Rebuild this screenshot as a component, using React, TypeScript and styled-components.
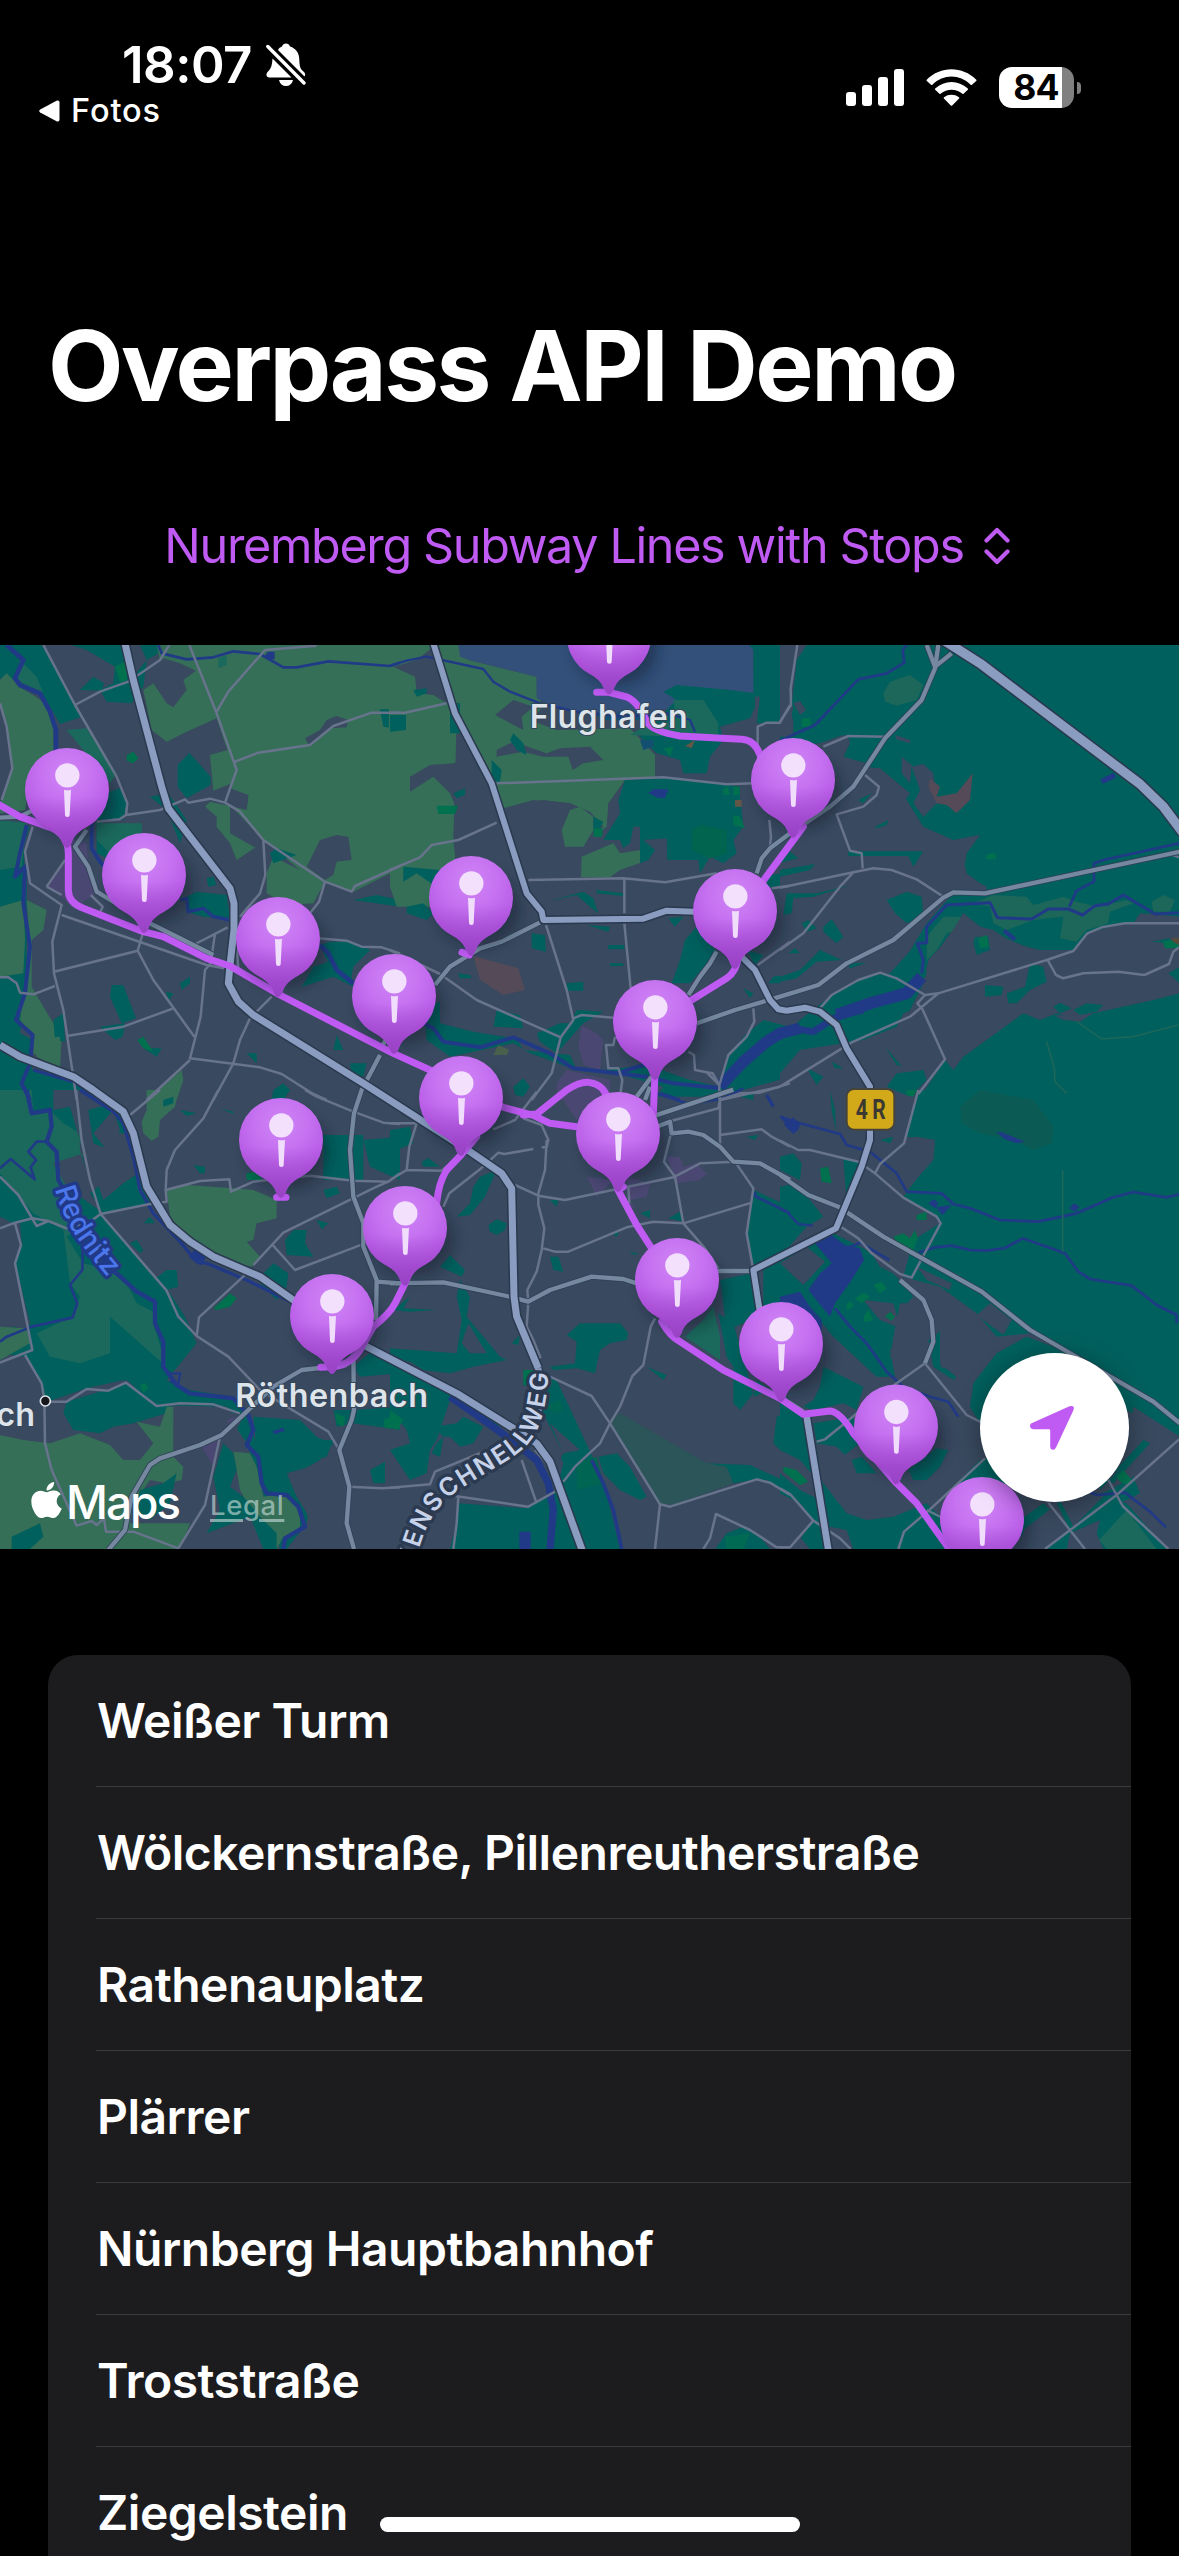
import React from "react";
import styled, { createGlobalStyle } from "styled-components";
import { FaApple } from "react-icons/fa";

const GlobalStyle = createGlobalStyle`
  html, body { margin: 0; padding: 0; background: #000; }
  * { box-sizing: border-box; }
`;

const Screen = styled.main`
  position: relative;
  display: flex;
  flex-direction: column;
  width: 1179px;
  height: 2556px;
  overflow: hidden;
  background: #000;
  color: #fff;
  font-family: Inter, "Liberation Sans", sans-serif;
`;

/* ---------- Status bar ---------- */

const StatusBar = styled.header`
  display: flex;
  flex: none;
  justify-content: space-between;
  height: 177px;
  padding: 0 98px 0 39px;
`;

const StatusLeft = styled.div`
  display: flex;
  flex-direction: column;
  padding-top: 41px;
`;

const ClockRow = styled.div`
  display: flex;
  align-items: center;
  height: 48px;
  padding-left: 83px;
  gap: 14px;
`;

const Clock = styled.span`
  font-size: 51px;
  font-weight: 600;
  line-height: 48px;
  letter-spacing: -0.5px;
`;

const BackLink = styled.div`
  display: flex;
  align-items: center;
  gap: 11px;
  height: 44px;
  font-size: 32.5px;
  font-weight: 500;
  line-height: 44px;
  letter-spacing: 0.9px;
`;

const StatusRight = styled.div`
  display: flex;
  align-items: center;
  height: 41px;
  margin-top: 67px;
`;

const WifiIcon = styled.svg`
  margin-left: 22px;
`;

const Battery = styled.div`
  display: flex;
  align-items: center;
  justify-content: center;
  width: 75px;
  height: 41px;
  margin-left: 22px;
  padding-right: 1px;
  border-radius: 13px;
  background: linear-gradient(90deg, #fff 63px, #808080 63px);
  color: #000;
  font-size: 35.5px;
  font-weight: 700;
  letter-spacing: -0.8px;
`;

const BatteryTip = styled.div`
  width: 4px;
  height: 12px;
  margin-left: 3px;
  border-radius: 0 5px 5px 0;
  background: #808080;
`;

/* ---------- Heading ---------- */

const Title = styled.h1`
  flex: none;
  height: 120px;
  margin: 129px 0 0 48px;
  font-size: 98px;
  font-weight: 700;
  line-height: 120px;
  letter-spacing: -2.5px;
  white-space: nowrap;
`;

const Picker = styled.button`
  display: flex;
  flex: none;
  align-items: center;
  justify-content: center;
  gap: 20px;
  height: 60px;
  margin: 90px 0 69px;
  padding: 0 5px 0 0;
  border: 0;
  background: none;
  color: #bf5af2;
  font-family: inherit;
  font-size: 48.5px;
  font-weight: 400;
  line-height: 60px;
  letter-spacing: -1.35px;
  white-space: nowrap;
`;

/* ---------- Map ---------- */

const MapFrame = styled.section`
  position: relative;
  flex: none;
  width: 1179px;
  height: 904px;
  overflow: hidden;
  background: #39495f;
`;

const MapCanvas = styled.svg`
  display: block;
  width: 1179px;
  height: 904px;
`;

const MapBrand = styled.div`
  position: absolute;
  left: 31px;
  bottom: 17px;
  display: flex;
  align-items: center;
  height: 60px;
  font-size: 46px;
  font-weight: 450;
  line-height: 60px;
  letter-spacing: -2.1px;
`;

const AppleMark = styled(FaApple)`
  width: 31px;
  height: 42px;
  margin: 0 4px 5px 0;
`;

const Legal = styled.a`
  position: absolute;
  left: 210px;
  bottom: 26px;
  color: rgba(206, 224, 222, 0.6);
  font-size: 27.5px;
  font-weight: 500;
  line-height: 36px;
  letter-spacing: 0.6px;
  text-decoration: underline;
  text-decoration-thickness: 3px;
  text-underline-offset: 4px;
`;

const LocateButton = styled.button`
  position: absolute;
  right: 50px;
  bottom: 47px;
  display: flex;
  align-items: center;
  justify-content: center;
  width: 149px;
  height: 149px;
  padding: 0 6px 0 0;
  border: 0;
  border-radius: 50%;
  background: #fff;
  box-shadow: 0 4px 24px rgba(0, 0, 0, 0.35);
`;

/* ---------- List ---------- */

const StopList = styled.ul`
  flex: none;
  margin: 106px 48px 0;
  padding: 0;
  border-radius: 30px 30px 0 0;
  background: #1c1c1e;
  list-style: none;
`;

const StopRow = styled.li`
  display: flex;
  align-items: center;
  height: 132px;
  margin-left: 48px;
  padding-left: 1px;
  border-bottom: 1px solid #3b3b3e;
  font-size: 48px;
  font-weight: 560;
  letter-spacing: -0.5px;
  white-space: nowrap;
`;

const HomeIndicator = styled.div`
  position: absolute;
  left: 380px;
  bottom: 24px;
  width: 420px;
  height: 15px;
  border-radius: 8px;
  background: #fff;
`;

/* ---------- Map data ----------
   The map is cut into six sectors; each sector's paths use its own origin. */

type Sector = "nw" | "n" | "ne" | "sw" | "s" | "se";

const ORIGIN: Record<Sector, [number, number]> = {
  nw: [0, -15],
  n: [1170, -15],
  ne: [2340, -15],
  sw: [0, 1335],
  s: [1170, 1335],
  se: [2340, 1335],
};

const U = "#39495f";
const T = "#00605d";
const F = "#356f58";
const M = "#1b695c";
const G = "#00714f";
const A = "#32507a";
const P = "#4a4872";
const R = "#544a58";
const W = "#213a87";

const land: [Sector, string, string][] = [
  // north-west
  ["nw", T, "M0 15H125L225 190L245 230L180 252L150 200L110 150L45 125L0 115Z"],
  ["nw", T, "M215 15H380L400 110L440 60L420 15H520L440 60L430 140L395 190L320 185L300 150L340 130L345 80L260 30Z"],
  ["nw", T, "M240 150L280 110L312 130L305 152Z"],
  ["nw", F, "M20 100L60 140L130 185L160 240V330L100 380L75 510L0 520V490L35 390L20 250L0 190V120Z"],
  ["nw", M, "M60 60L110 110L130 160L45 120Z M200 270L260 265L350 400L330 430L250 330Z"],
  ["nw", F, "M470 15H1210V680L1060 755L975 725L940 790L860 795L800 760V700L820 650L900 690L790 600L770 620L710 660L690 610L650 560V530L615 500L630 485L700 500L740 510L745 470L700 460L690 432L640 452L630 345L682 330L650 235L560 275L500 305L455 270L430 150L460 130L480 60Z"],
  ["nw", U, "M460 130L500 190L520 202L560 150L550 120L588 92L540 70L490 55L440 100Z"],
  ["nw", U, "M915 295L960 270L980 240L1010 228L1045 240L1040 262L990 265L930 320Z M920 680L960 600L1010 585L1045 590L1055 660L1010 665L1000 705L975 720Z"],
  ["nw", U, "M690 490L740 505L745 465L690 445Z M690 495L790 600L770 625L690 580Z"],
  ["nw", T, "M568 338L632 410V435L560 475L533 440V375Z M450 470L505 460L560 540L540 610L500 510Z M1140 208H1200V268L1150 260Z"],
  ["nw", T, "M290 470L360 445L380 490L370 540H290L330 560L420 550L425 590L370 650L330 660L290 640Z"],
  ["nw", M, "M290 550H425V600L330 640L290 600Z M655 55L680 45V75L655 85Z"],
  ["nw", G, "M380 345L400 335L415 355L400 370L380 362Z M345 80L385 60L380 120L360 125Z"],
  ["nw", P, "M200 590L260 610L265 680L290 760L220 805L185 770L140 740L200 660Z"],
  ["nw", T, "M0 560L60 545L90 560L70 620L75 700L60 720L0 700Z M0 680H80V1060L60 1180L100 1200L95 1300L0 1230Z"],
  ["nw", M, "M0 540L80 550L65 680L0 690Z"],
  ["nw", F, "M0 800L70 780L75 900L70 1000L0 1010Z M80 780L140 810L130 870L95 900V1040L130 1100L185 1190L180 1290L100 1240L100 1190L60 1140L80 990L90 920Z"],
  ["nw", T, "M560 770L590 755L680 765L690 835L610 830L560 815Z M620 715L640 710L650 735L625 740Z M160 1140L190 1120L195 1205L165 1200Z"],
  ["nw", T, "M335 1035H370L408 1135L365 1150L330 1070Z M300 1160L375 1150L368 1190L345 1200Z M540 1030L570 1010V1030L545 1050Z M497 1055L520 1060L508 1080Z M430 1225L485 1225L470 1250Z M740 1240L770 1240V1270Z M1010 1185L1030 1230L1000 1230Z M1050 1270L1100 1270L1090 1310L1055 1300Z"],
  ["nw", G, "M412 1200L430 1190L460 1235L430 1225Z"],
  ["nw", T, "M960 915L990 905L1060 905L1110 930L1060 980L1050 1030L980 960Z M1000 960L1050 980L1060 1040L1000 1010L905 1040L940 980Z M810 640L830 625L890 645L820 670Z M1060 780L1130 765L1200 780V800Z"],
  ["nw", F, "M545 1290L550 1320L530 1380H440L500 1330Z"],
  ["nw", T, "M0 1230L100 1290L220 1310L300 1350L330 1380H0Z"],
  ["nw", F, "M100 1200L180 1190L178 1290L110 1250Z"],
  ["nw", T, "M820 1350L850 1330L870 1350L850 1380H815Z"],
  // north
  ["n", F, "M-5 15H205L235 60L440 110V160L460 200L420 240L500 270L720 265L795 345V410L705 420L655 490L650 560L610 590L600 520L540 490L460 480L340 505L300 430L200 240L190 600L200 690L130 800H20L0 740Z"],
  ["n", U, "M10 80L80 60L130 20L165 110L170 190L130 165L80 160L75 110Z"],
  ["n", U, "M60 410L120 375L190 370L240 350L300 430L400 760L455 820L330 905L180 860L130 790L195 680V590L205 520L180 460L130 410L60 455Z"],
  ["n", U, "M340 505L430 480L540 490L600 515L640 560L600 600L560 620L520 600V540L550 505Z"],
  ["n", F, "M540 510L570 500L610 530L610 570L580 620H525L515 570Z M575 650L670 610L690 640L752 630V668L690 690L660 712H573Z"],
  ["n", U, "M315 225L370 180L430 200L395 230L400 270Z M320 330L370 305L470 340L510 325L600 320L640 360L580 370L548 390L535 350L460 350L400 335L320 350Z"],
  ["n", T, "M305 360L335 390L330 425L305 425Z M370 280L400 310L410 345L380 330L360 300Z M0 225H48V270L0 275Z M70 150L110 145V160L80 170Z M190 460L225 445V465L200 475Z M180 190H210V280L180 280Z"],
  ["n", G, "M140 497H204L195 522H145Z M610 565H637V590H610Z"],
  ["n", A, "M205 15H1090V80L1095 160L860 175L850 205L640 230L500 205L440 175V110L240 60L210 50Z"],
  ["n", T, "M1078 15H1200V200L1160 250H1100L1110 170H1090V30Z"],
  ["n", T, "M820 155L860 135L1020 150L1095 160V200L1080 235L990 260L1000 300L960 350L950 400L880 400L870 360L800 340L750 290L860 180Z"],
  ["n", M, "M850 180H940L985 250V300L860 290L720 285L760 260L860 240Z"],
  ["n", "#134f70", "M750 300H790V320L760 330Z M610 218H760V240H640Z"],
  ["n", T, "M705 420L820 415L990 430L1050 440V470L1060 560L1030 600L1040 640L1000 670L960 650L930 700L925 660H832L830 595L760 600L795 630L775 660L750 670V560L730 560L720 610L700 625L690 600L640 600L690 520L685 480Z"],
  ["n", "#00644f", "M905 570L935 555L1010 570V640L960 655L905 630Z"],
  ["n", G, "M1000 445L1015 440L1018 465H1000Z M1030 440H1048V465H1030Z M1030 525L1050 530L1065 565L1030 555Z M820 325L850 320L840 350Z"],
  ["n", "#625747", "M885 318L915 300L905 325Z M1035 480H1055V500H1035Z"],
  ["n", T, "M610 530L640 545L630 565L610 565Z M40 680L150 690L130 735L80 700L40 725Z M50 800L100 790L130 820L110 840L50 820Z"],
  ["n", T, "M470 785L580 755L610 775L625 820L600 800L560 765Z M620 750L700 760V768L620 760Z M425 880L465 885L468 935L425 925Z M590 855L660 860L655 875Z M655 915H703V928H655Z M660 970H700V978H660Z M530 1030L580 1025V1052H530Z M205 1000L240 1005L245 1015H210Z M835 835L880 830L855 860Z"],
  ["n", R, "M250 948L385 985L405 1050L340 1065L270 1020Z"],
  ["n", T, "M920 860L980 935L900 1030L845 1030L870 960L885 900Z M1070 930L1120 945L1095 975Z M1120 710L1200 695V730L1130 745Z M1150 1010L1200 1000V1030H1135Z M1060 1045L1090 1060L1080 1075Z"],
  ["n", T, "M100 1100L150 1085L150 1150L250 1175L310 1185L380 1195L400 1230L540 1245L560 1290L420 1240L370 1210L180 1250L110 1200Z M320 1110L390 1125L400 1165L310 1160Z M440 1180L510 1150L540 1150L560 1110L640 1115L580 1150L500 1240L450 1205Z"],
  ["n", P, "M565 1215L575 1155L620 1180L640 1200L630 1290L580 1275Z M500 1330L530 1290L660 1320V1380H500Z"],
  ["n", "#49604d", "M310 1245L325 1215L358 1230L350 1245Z"],
  ["n", T, "M370 1340L400 1315L420 1340L400 1370L375 1365Z M640 1290L770 1275L900 1320L990 1340L1010 1260L1060 1190L1120 1140L1200 1160V1310L990 1370H800L820 1340L750 1320Z"],
  // north-east
  ["ne", T, "M0 15H1200V860L1110 820L1060 850L1000 860L930 880L880 930L780 930L700 910L640 870L600 860L550 820L510 880L440 980L420 1100L200 1190L0 1260V1190L110 1100L180 1060L260 1030L350 1000L440 850L520 760L620 755V740L600 730L560 700L545 640L600 585L520 600L430 560L380 480L330 440L260 370L190 350L210 300L190 285L120 310L50 320L0 300V240L40 210Z"],
  ["ne", U, "M0 15H80L50 60L35 200L40 280L0 290Z M40 190L60 182L78 210L60 225Z M0 230L40 240V290H0Z"],
  ["ne", G, "M65 235H92V260H65Z"],
  ["ne", U, "M120 310L200 285L210 310L190 350L240 380L300 385L390 460L370 490L390 540L430 590L410 640H250L210 640L180 540L0 640V320Z M365 350L395 375L390 430L365 400Z M395 380L430 372L460 400L470 490L430 530L400 490L420 450Z M345 285L390 300V310L350 298Z"],
  ["ne", U, "M0 640L210 635L245 645V690L400 680L430 640L515 598L500 670L495 740L520 760L430 830L340 900L200 970L115 1030L0 1065Z M545 640L570 590L600 585L560 640L550 700L595 730L520 745Z"],
  ["ne", T, "M205 634H430L400 680L385 648H205Z M0 690L105 672L90 690L0 710Z M0 650L30 635L55 655L0 668Z M130 860L155 838L190 890L170 910L130 875Z M320 780L380 755L425 770L430 830L380 850L345 820Z M20 760H110L215 735L100 770L40 775L35 820L10 825Z M65 850L85 840L110 865L80 875Z M100 950L120 930L185 960L110 965L50 1015L0 1025V1010L60 990Z M285 560L325 540L320 555L290 565Z M235 480L275 460L250 490Z M200 970L260 968L210 985Z M25 940L45 925L60 940Z"],
  ["ne", "#1d665a", "M310 160L330 125L390 105L430 135L410 180L350 197L315 185Z M580 790L640 765L740 770L760 795L850 770L890 785L950 800L1040 780L1060 790L990 815L985 850L920 870L890 905L840 895L850 830L760 840L680 870L640 850L630 800Z M1115 785L1150 765L1185 780L1170 815H1120Z M440 890L490 830L550 830L555 865L500 880L470 930L440 960Z"],
  ["ne", R, "M450 415L480 440L470 470L530 460L578 400L570 480L530 520L500 495L470 490L445 440Z"],
  ["ne", U, "M550 820L600 860L690 900L760 930L900 930L920 880L1000 858L1060 850L1080 820L1200 830V1060L1120 1080L940 1120L900 1145L830 1120L780 1140L730 1120L550 1250L520 1290L480 1290L420 1350L300 1360L0 1380V1300L60 1210L250 1200L380 1130L430 1030L445 960L500 900Z"],
  ["ne", T, "M585 890L625 890L630 930L590 945L580 910Z M615 1035L670 1040L665 1065L615 1070Z M680 1060L735 1040L750 970L790 980L800 1025L750 1050L710 1090H685Z M820 1100L840 1088L875 1105L840 1120Z M880 1110L920 1090L970 1095L950 1115L900 1125Z M1165 1000L1200 980V1030Z M1115 905L1170 895V910Z M315 1220L365 1278L350 1275Z M155 1265L190 1285L165 1285Z M80 1285L130 1310L110 1335Z"],
  ["ne", G, "M595 895L620 885L627 920L600 925Z M618 645L645 638L648 658H620Z M1148 905L1197 895V925L1155 925Z"],
  ["ne", "#584c3f", "M1175 893H1197V915L1178 905Z"],
  ["ne", T, "M350 1300L430 1290L440 1320L390 1370L320 1340Z M250 1130L380 1100L350 1160L250 1200L60 1230L0 1300V1220L60 1190Z M0 1190L110 1100L180 1050L250 1010L330 1000L420 900L440 1000L400 1090L250 1160L80 1180Z"],
  ["ne", T, "M1200 1060L1120 1080L940 1120L900 1145L830 1120L780 1140L730 1120L550 1250L520 1290L495 1260L415 1380H1200Z"],
  ["ne", U, "M820 1125L890 1128L905 1145L850 1140Z"],
  // south-west
  ["sw", T, "M0 0H280L370 65L400 130L430 260L455 350L520 420L510 540L520 600L590 760L500 870L570 900L700 920L740 980L770 1060L830 1000L1000 1060L960 1110L890 1150L930 1230L920 1300L860 1377H740L620 1330L700 1250L640 1150L720 1000L680 950L470 945L380 870L320 900L260 895L130 940L120 870L75 800L0 790V720L90 700L45 520L60 460L40 400L0 380Z"],
  ["sw", M, "M0 0H95L100 70L150 60L190 100L240 130L250 200L180 230L240 410L200 440L250 520L330 540L380 580L410 640L470 670L460 700L500 830L330 680L330 790L240 820L150 800L110 730L215 680L240 620L210 580L190 420L100 370L0 250Z"],
  ["sw", U, "M230 0L240 180L275 310L400 280L440 330L480 340L310 370L200 290L160 220L250 190L210 50L160 60V0Z M0 400L60 400L65 460L45 520L90 700L75 720L0 700Z M0 820L75 800L120 870L135 1060L180 1020L100 1030L0 1010Z"],
  ["sw", U, "M230 0H280L365 65L405 150L440 300L510 405L570 455L780 560L880 640L1060 830L820 890L590 735L510 610L300 370L260 280L240 130Z"],
  ["sw", T, "M265 60L340 40L370 70L400 170L440 300L450 340L310 370L270 310L320 270L330 180L280 160Z M390 460L410 450L430 480L420 490Z M430 400L450 380L465 400Z M460 570L500 540L530 540L535 590L500 600Z"],
  ["sw", U, "M280 130L340 60L360 120L340 170L320 180Z M320 130H400L430 240L370 280L310 330L290 270Z"],
  ["sw", U, "M150 940L260 895L370 870L470 945L500 945L520 1000L420 980L300 1000L200 1030L150 1000Z"],
  ["sw", T, "M200 935L380 880L420 900L470 945L520 950L500 970L400 1000L340 1010L300 1030L220 1020L190 970Z"],
  ["sw", F, "M0 1035L70 1050L150 1060L240 1030L330 1065L370 1110L420 1110L460 1060L410 995L480 1010L500 950H520V1100L550 1130L545 1170L500 1180L450 1170L400 1240L390 1300L570 1300L540 1377H0Z"],
  ["sw", T, "M490 1180L530 1150L510 1240L450 1290L400 1270L420 1200Z M35 1340L120 1300L130 1340L90 1377H35Z"],
  ["sw", F, "M0 710L80 715L90 760L0 810Z"],
  ["sw", F, "M440 0H535L525 50L480 90L475 140L455 152L430 130L425 95L440 60Z M500 300L560 285L700 295L760 300L830 330V385L770 400L760 450L740 455L780 500L755 530L700 520L570 450L510 380Z"],
  ["sw", T, "M490 30L520 20V40L490 50Z M540 60L590 70L560 78Z M580 225L615 230V250H600Z M660 55L700 65V72Z M970 135H1090V270H970Z M1090 150L1200 140V270L1110 230Z M855 450L880 420H920L915 460L940 500L860 495Z M780 560L820 520L865 550L860 590L830 630L780 580Z M950 390L985 400L965 418Z M970 300L1010 290L1020 310L980 325Z"],
  ["sw", G, "M640 655L690 610L710 625L690 650L650 660Z M738 250L770 245L790 270H740Z M420 885L435 878L445 895L430 908Z"],
  ["sw", U, "M650 1040L700 1000L740 1060L780 1180L810 1280L840 1377H540L600 1260L640 1120Z M520 1000L600 960L720 970L660 1035L520 1090Z M860 1150L930 1130L990 1100L1020 1080L1048 1190L1040 1300L1060 1377H930L940 1330L920 1270L890 1220Z"],
  ["sw", F, "M700 1085L750 1090L770 1130L790 1220L860 1210L900 1260V1320L850 1340L830 1377L790 1330L720 1200L710 1140Z"],
  ["sw", T, "M640 1160L670 1060L700 1090L710 1140L690 1190L730 1220L780 1280L830 1330V1377H790L750 1280L620 1330L660 1260Z M760 980L900 990L960 1050L1000 1050L980 1100L900 1120L850 1160L800 1180L770 1090Z"],
  ["sw", P, "M605 1070L655 1050L640 1130Z M680 990L720 975L720 1000L690 1010Z"],
  ["sw", T, "M1000 960H1060L1200 950V1020L1060 1000L1010 1010Z M1110 1140L1155 1115V1180L1120 1180Z M1120 780L1200 820V850L1080 860L1060 830Z"],
  ["sw", G, "M1150 990L1200 970V1015L1155 1015Z M1005 970L1035 980L1030 1010L1010 1000Z"],
  // south
  ["s", P, "M500 0H640L560 90Z M590 260L670 270L620 320Z M830 200L870 200L880 230L920 220L950 250L930 270L860 280L850 250Z M710 260L780 280L770 320L720 330L740 360L715 340Z"],
  ["s", T, "M0 120L60 110L70 160L20 180H0Z M95 215L115 205L150 230L100 230Z M200 380L240 340L250 290L270 260L320 240L285 320L240 375Z M295 405L320 388L350 400L345 420L320 435L300 425Z M480 330L505 330L500 350Z M480 500L505 500L520 545L490 540Z M665 430L690 420L680 440Z M750 370L780 360V385Z M715 485L745 490L735 495Z M835 385L870 365L880 395Z M1070 140L1105 135L1095 150Z"],
  ["s", T, "M530 735L570 700H690L715 730L710 750L660 760L630 780L615 850L560 835L490 840L480 830L555 820L560 755Z M365 760L390 735L385 765Z M150 530L180 495L225 540L215 560Z M210 570L240 620L230 680L330 800L350 810L250 830L180 850L100 840L60 815L0 800V775L200 790L215 690L200 620Z M10 660L60 620L40 655L140 660L60 665Z M770 830L830 855L820 870Z"],
  ["s", U, "M235 700L290 790L240 790L215 760Z"],
  ["s", T, "M0 800L200 910L370 1015L280 1000L240 960L180 930L160 990L140 1050L120 1080L110 1150L60 1170L0 1080L60 1060L50 1020L0 960Z"],
  ["s", T, "M130 1010L200 1000L220 980L280 1010L250 1060L210 1070L180 1040L160 1040Z M140 1060L160 1040L150 1100L125 1090Z"],
  ["s", G, "M0 960L40 990L20 1020L0 1010Z M400 840L440 840L430 890L400 885Z"],
  ["s", T, "M460 860L500 870L640 1170L690 1377H180L200 1300L205 1240L410 1255L500 1200L520 1120L450 960Z"],
  ["s", U, "M440 930L520 1090L500 1130L440 1040Z M480 1000L570 1080L520 1090Z"],
  ["s", "#006552", "M470 950L510 930L520 960L495 970Z M560 1120L620 1100L640 1180L560 1200Z"],
  ["s", "#2b5558", "M660 1000L690 970L950 1120L1010 1125L1030 1180L850 1245L810 1240Z"],
  ["s", T, "M625 1100L680 1090L720 1130L770 1220L750 1230L690 1200L640 1150Z M950 1120L1080 1125L1200 1180V1210L1130 1170L1090 1170L1030 1180L1010 1130Z M985 670L1030 700L1090 910L1050 960L1030 940V830L1010 800Z M1100 870L1140 900L1090 920Z"],
  ["s", M, "M885 740L940 690L970 650L990 740V810Z"],
  ["s", T, "M1090 300L1200 350V470L1090 540L1070 430L1085 350Z M990 570L1060 555L1090 550L1110 650L1060 700L1010 720Z M1120 530L1200 490V650L1120 650Z M1160 980L1200 960V1110L1150 1060Z M980 1370L1010 1330L1060 1310L1110 1340L1140 1377H980Z M1050 20L1090 10V30Z"],
  ["s", "#006a52", "M1005 1340L1080 1330L1060 1377H1010Z"],
  // south-east
  ["se", T, "M410 0H1200V1000L1050 900L900 810L750 730L650 740L590 670L480 590L370 560L400 450L480 400L470 380L370 320L400 280L460 200L465 150L380 140Z"],
  ["se", U, "M370 150L410 140L465 150L460 210L380 300L330 240Z M590 675L630 640L695 690L670 735Z M410 530L515 580L510 600L440 570Z"],
  ["se", "#0b5b54", "M540 50L600 0L760 30L820 110L815 160L760 180L700 150L600 130L545 100Z"],
  ["se", T, "M0 200L40 190L65 220L60 270L0 240Z M150 0L165 60L168 125L155 60Z M0 290L50 280L90 330L130 380L80 410L0 500Z M190 205L240 220L200 340Z M300 150L340 140L330 160Z"],
  ["se", T, "M0 500L160 430L260 480L350 560L400 620L370 650L360 720L390 760L330 780L345 860L290 860L160 740L60 620L0 620Z"],
  ["se", U, "M0 520L80 470L135 515L70 585Z M250 630L340 640L355 690L350 710L300 690Z M360 640L420 640L450 700L455 760L430 820L400 790L330 805L340 740Z M280 500L350 530L360 560L300 530Z"],
  ["se", T, "M445 750L500 710L530 725L510 760L480 830L540 850L520 870L460 830Z M500 810L520 800L530 830Z M580 770L625 795L600 810Z"],
  ["se", G, "M120 235L145 230L155 280L125 275Z M340 440L370 430L390 445L405 420L413 445L400 480L360 470Z M410 375L440 365V390H410Z M225 625L250 608L270 620L245 640Z M250 680L265 660L280 690L255 697Z M315 680L330 665L345 680L335 692Z M280 585L305 575L320 595L300 610Z M200 640L215 635L220 650L200 660Z M380 0H410L400 20L380 15Z"],
  ["se", T, "M580 880L650 790L740 740L900 800L1130 940L1200 1000V1040L1060 950L1050 1040L980 1050L600 1000L570 950Z"],
  ["se", U, "M480 820L540 870L590 860L650 750L600 700L480 620Z M1040 960L1190 1040L1060 1160L1040 1060Z"],
  ["se", T, "M130 830L250 890L230 960L190 940L100 960L70 950L100 930L120 890Z M155 905L180 890L188 915L160 920Z M0 900L60 960L90 1000L100 1060L130 1300L60 1260L0 1200Z M0 1060L100 1120L130 1180L200 1270L260 1290L340 1280L440 1240L480 1280L400 1310L370 1377H90L60 1340L0 1370Z M100 1000L220 980L240 1060L120 1150L110 1060Z M150 1010L215 1060L170 1090L120 1080Z"],
  ["se", U, "M110 1060L170 1070L280 1180L350 1260L250 1270L170 1220L120 1150Z M0 1080L60 1110L120 1180V1230L60 1200L0 1150Z M0 1210L60 1240L100 1290L40 1377H0Z M150 1310L200 1320L220 1377H150Z"],
  ["se", T, "M385 1140L470 1075L505 1080L480 1130L440 1170L400 1170Z M215 1110L245 1100L290 1150L230 1150Z M600 1110L640 1100L680 1180L560 1210L540 1170Z M370 1320L450 1260L510 1290L500 1377H360Z M720 1290L790 1240L810 1260L720 1340Z M960 1200L1100 1050L1040 1120L960 1180Z M800 1377L990 1230L1040 1240L1160 1377Z M1090 1050L1110 1060L1000 1180L980 1170Z M830 1240L940 1220L990 1200L1060 1160L1080 1210L1000 1250L870 1320Z"],
  ["se", U, "M730 1320L820 1250V1310L760 1370H740Z M870 1330L960 1290L950 1330L970 1377H860Z M840 1230L980 1210L880 1310Z"],
  ["se", G, "M1010 1160L1030 1140L1055 1170L1045 1185L1020 1175Z M10 1130L50 1140L85 1175L60 1185L10 1145Z"],
  ["se", M, "M1040 1260L1130 1377H980L957 1350Z"],
];

const water: [Sector, string, number][] = [
  ["nw", "M20 15L70 60L45 115L60 135L120 160L150 215L168 270V330", 14],
  ["nw", "M475 15L485 40L560 58L640 52L700 34L780 42L850 82H890L985 64L1170 78L1200 68", 8],
  ["nw", "M275 545V625L300 665L350 720", 12],
  ["nw", "M80 555L60 640L45 710L75 680L70 790L90 920L75 1060L48 1140L98 1185L90 1270L65 1330L90 1380", 12],
  ["nw", "M540 780L560 775L565 815L610 805L640 830L690 840", 10],
  ["nw", "M960 915L985 940L1010 990L1060 1030", 14],
  ["nw", "M100 1290L220 1325L310 1380", 10],
  ["n", "M0 77L50 62L110 50L280 87L310 125L360 155L450 190L560 215L700 230L830 220L900 240L915 275", 7],
  ["n", "M1200 290L1170 300", 7],
  ["n", "M100 1150L130 1165L160 1205L270 1222L370 1192L480 1240L550 1285L680 1300L770 1310L850 1330L990 1345", 12],
  ["n", "M680 1300L770 1272L810 1275", 12],
  ["n", "M990 1340L1060 1265L1130 1205L1170 1180L1230 1165", 34],
  ["n", "M810 1360L870 1380", 10],
  ["ne", "M380 15L368 30L373 68L320 100L235 118L105 255L20 293", 8],
  ["ne", "M0 1190L40 1165L100 1175L170 1130L250 1110", 20],
  ["ne", "M170 1125L270 1090L380 1060L425 1010", 36],
  ["ne", "M425 1000L430 960L412 910L440 908V860L500 795L630 788L652 833L755 837L805 807H865L908 825L945 797L985 792L1030 765L1125 822L1200 818", 9],
  ["ne", "M868 800L890 752L942 725V670L970 660L1197 610", 8],
  ["ne", "M965 425L1005 405", 16],
  ["ne", "M672 872L705 898", 12],
  ["sw", "M80 0L95 70L150 60L155 110L140 155L170 185L175 270L210 330L330 540L350 550L410 605L465 635V700L490 755V830L530 885L570 910L700 925L745 975L760 1020L740 1065L775 1100L785 1180L800 1210L860 1215L895 1250L915 1310L855 1345L850 1377", 13],
  ["sw", "M138 155H110L85 185L108 210L92 232L104 268L32 207L0 235", 8],
  ["sw", "M250 420L247 540L210 585L232 640L218 683L95 710L20 740L0 755", 8],
  ["sw", "M508 850L540 850L535 880L510 875", 7],
  ["sw", "M240 0L340 65L370 100L400 200L420 300L460 370L540 455L590 515L620 520L740 570L880 640", 10],
  ["sw", "M575 490L610 515", 28],
  ["sw", "M820 1028L852 1018", 10],
  ["s", "M180 920L260 975L350 1040L440 1110L475 1180L490 1260L480 1377", 22],
  ["s", "M405 1325V1377", 34],
  ["s", "M605 1110L640 1180L670 1260L695 1377", 11],
  ["s", "M800 10L895 42L1000 25L1060 -5", 8],
  ["s", "M1095 305V318L1200 370", 8],
  ["s", "M1130 15L1150 50 M1175 80L1200 110", 10],
  ["se", "M0 80L60 100L180 132L200 165L270 185L350 250L380 305L485 310L520 342L570 355L660 390L775 395L890 370L1000 322L1060 306L1160 322L1200 312", 8],
  ["se", "M415 488L460 473L515 467L570 480L620 482L675 474L728 445L800 470L855 490L895 545L930 567L1055 587L1130 645L1190 675V700", 8],
  ["se", "M0 355L20 365L55 402L98 407", 7],
  ["se", "M165 655L210 710L260 760L320 845L370 890L450 920L505 935L535 980", 8],
  ["se", "M200 475L240 458L328 510", 8],
  ["se", "M930 1208L955 1215L1035 1208L1110 1265L1158 1312", 8],
];

const lakes: [Sector, string][] = [
  ["nw", "M803 35H824V58H808L795 48Z"],
  ["n", "M775 460L790 448H835L825 475L800 472Z"],
  ["se", "M105 460L150 432L195 465L240 475L252 510L215 570L165 640L150 680L85 600L120 550L155 520Z"],
  ["se", "M0 620L60 605L90 650L125 690V720L0 740Z"],
  ["se", "M12 105L38 82L60 103L55 120L40 132Z M445 340L462 328L475 340L465 355Z M467 352L515 345L488 375Z M648 125L665 127L735 155L710 160L675 148Z M868 355L882 340L898 350L885 365Z"],
];

const minorRoads: [Sector, string][] = [
  ["nw", "M130 15L225 195L350 410L382 490L378 525L358 538L290 545 M225 195L300 155L385 125L480 60L508 15 M378 525L480 510L555 478L565 488L630 476L675 488L720 515L790 600L975 725L1055 755L1065 738L1200 678 M568 15L650 220L710 390L675 488 M650 215L685 155L795 30L950 17 M705 365L775 338L930 315L1000 258L1115 218H1200"],
  ["nw", "M790 600L796 705L780 760L720 830 M975 725L957 785L930 820 M0 190L20 260L37 385L5 480 M98 560L75 635L90 730L185 795L157 905L162 1000L190 1110L230 1380 M185 825L620 975L672 985 M162 995L413 932L430 875 M413 932L460 1020L583 1190 M205 1187L370 1160L520 1105 M683 862L648 880L580 915 M645 880L632 970L615 990L602 1130L570 1255L780 1282L845 1302L940 1362L980 1380 M570 1260L440 1380 M815 1070L750 1135L720 1200L700 1270L640 1380 M0 1012H25L50 1030L60 1058L100 1063L165 1038 M140 740L195 660 M140 740L185 765 M272 765L308 800L300 818"],
  ["nw", "M955 895L1040 902L1085 920L1145 922L1200 940 M710 920L715 985"],
  ["n", "M0 218H45L170 190 M320 430L820 412L1010 433L1090 430 M0 690L90 652L125 615L205 600L320 548 M415 720L700 715L825 727L980 700 M703 715V820 M703 850L722 1045 M468 855L530 1050L550 1140L512 1192L485 1300L425 1380 M550 1135L575 1125L670 1133 M0 930L150 1002L260 1080L512 1192 M1200 195L1170 248H1130L1103 260V320 M1138 540L1143 590L1140 620 M1145 745L1200 737 M1103 975L1200 905 M675 1190L670 1215H648L655 1285H685L697 1320L690 1370 M895 1235L912 1245L915 1290L950 1297L988 1335V1380 M1090 1105L1093 1145L1070 1190L1015 1245L988 1335 M950 1297L968 1300L988 1335 M988 1380L1050 1360L1110 1358L1200 1330"],
  ["ne", "M52 15L32 145L33 195L0 245 M315 290L205 288L130 320 M255 405L297 440L290 465L250 500L170 523L210 632L245 640L248 685 M0 743L220 697L280 685L335 690L410 718L490 770 M220 697L180 740L70 880L0 930 M120 1105L155 1065L235 1020L300 998L350 1015L435 1065L475 1060L800 960L880 933L922 880L965 862L1035 850H1197 M803 960L828 1005L850 1015L910 1000L1015 995L1093 1005L1167 972L1180 935L1197 922 M475 1060L390 1130L215 1207L0 1340 M435 1065L412 1090L427 1107L495 1258L415 1362 M1165 640L1197 652"],
  ["sw", "M228 0L245 150L270 270L302 372L500 602L535 680L590 738L685 800L780 900L860 950L985 1025L1018 1080 M302 372L445 343L500 335L497 300L600 273L688 268L693 305L760 275L930 257L1060 272L1165 275L1200 250 M302 372L270 395L200 415L145 393L98 385L45 398L0 415 M0 260L55 315L110 408L145 393 M45 400L63 465L45 520L97 780L0 818 M75 795L125 880L133 930L135 1060L155 1140L230 1307L275 1293L290 1305L312 1285L318 1325H400L535 1375L615 1245L660 1040 M150 935H200L260 897L325 902L378 878L470 948L540 940L640 943L720 970 M390 75L480 0 M655 0L610 85L525 180L500 240L497 300"],
  ["sw", "M915 0L950 20L1060 65L1150 98L1200 102 M818 465L885 540L1030 485L1095 460 M760 525L850 428L1130 290L1165 275 M590 738L597 682L740 550 M1048 1190L1145 1195L1200 1192"],
  ["s", "M0 100H80L58 170L50 240L155 242L205 200 M50 240L0 270 M160 350L178 310L270 238L325 188L343 192L430 177 M455 172H470L475 150L455 105L400 85 M470 150L465 240L445 310V345L463 415L455 480L440 545L412 600L415 635L410 710L430 750L452 805 M310 118L375 90L440 5 M375 285L445 317L525 330L850 262L930 220L1035 215L1090 295L1070 430L1090 540 M460 475L495 485H535L710 412L790 395L880 400L1085 338 M843 130L822 215L855 260L880 400L945 475L990 543 M990 135L1115 118L1145 140L1200 170 M990 0V170 M845 92L985 55L990 30L1170 -10"],
  ["s", "M0 1193L120 1183L135 1145L330 1065 M195 1218L415 1250L495 1205 M205 1220L200 1300L190 1377 M395 1110L440 1240 M435 1080L470 1120 M480 860L605 918L660 1000L810 1243L840 1250L1100 1168L1140 1178L1200 1215 M810 1243L795 1377 M940 1377L960 1345L978 1272L1080 1320L1160 1372H1200 M795 685L782 710L760 825L727 858L690 950L660 1000L630 1060L555 1130L520 1175 M715 290L718 340"],
  ["se", "M0 152L55 180L90 180L235 215L285 250L370 323L470 380L482 400L395 563L360 552L275 490L235 445L185 412 M415 0L372 160L300 222L285 250 M435 820L350 880L280 930L135 1048L110 1055 M435 820L560 975L605 998 M0 1195L30 1212L100 1292L180 1345L212 1377 M100 1292L30 1372H0 M615 1105L450 1258L372 1325L355 1377 M440 1260L500 1290 M1197 1048L1010 1215L795 1377 M805 1238L915 1377 M985 1170L1028 1248L1165 1377"],
];

const mainRoads: [Sector, string][] = [
  ["ne", "M475 15L465 85L425 180L315 295L220 440L150 500L30 580L-30 625L-55 655L-70 700"],
  ["ne", "M440 15L465 80L515 40"],
  ["ne", "M-250 1150L-135 1110L0 1070L115 1035L200 970L340 900L490 773L520 757L615 760L1200 635"],
  ["n", "M455 845L335 905L270 925L180 980L135 1035"],
  ["n", "M980 935L960 970L930 1010L895 1065"],
  ["n", "M785 1310L740 1370 M780 1340L765 1380"],
  ["se", "M-140 -1L-400 85 M0 255L85 315L175 350L310 440L605 605L750 720L1120 935L1200 1000"],
  ["s", "M800 110L840 95L845 130L895 125L940 135L990 170L1030 215L1110 220L1200 270"],
  ["s", "M0 580L160 577L350 618L415 635L480 600L605 560L700 567L740 580 M980 543H1090"],
  ["sw", "M1140 -105L1085 0L1062 70L1050 180L1060 320L1090 400V470L1130 570L1128 690 M1130 575L1200 580"],
  ["sw", "M1060 790L1062 960L1055 990L1018 1080L1048 1190L1040 1300L1062 1377"],
  ["sw", "M1040 825L905 840L820 890L740 965L665 1035L600 1065L480 1105L450 1125L395 1220L375 1320L325 1380"],
  ["nw", "M0 533L60 530L100 510 M260 570L225 620L265 680L290 755L430 840L640 945 M1180 1160L1140 1230"],
  ["se", "M360 570L430 630L455 690L460 755L435 820"],
  ["se", "M0 920L70 965"],
];

const motorways: [Sector, string, number][] = [
  ["nw", "M375 10L400 120L485 440L505 505L690 745L702 790V870L690 975L685 1030L715 1085L760 1125L1090 1330L1410 1535L1505 1600L1535 1645L1542 1970L1550 2030L1615 2185", 21],
  ["nw", "M0 1215L60 1250L220 1310L280 1350L370 1415L400 1480L440 1640L510 1755L570 1805L640 1850L780 1910L880 1980L1100 2120L1370 2260L1540 2365L1610 2410L1650 2465L1750 2740", 21],
  ["nw", "M1615 2185L1630 2260L1600 2370", 18],
  ["n", "M130 10L195 220L305 430L410 760L455 815L460 840L760 836L830 812L960 817L1060 955L1095 990L1140 1080L1165 1108L1190 1112L1245 1103L1290 1115L1340 1155L1370 1225L1440 1340V1500L1415 1580L1338 1765L1090 1890L1115 2050", 18],
  ["ne", "M490 0L600 70L1080 432L1150 500L1210 580", 28],
  ["se", "M80 980L145 1380", 20],
];

const subway: [Sector, string][] = [
  ["nw", "M-10 490L60 530L150 562Q205 585 205 640V750Q205 788 250 805L430 875L490 890L620 955L690 978L840 1065L1180 1240L1290 1290L1400 1350"],
  ["s", "M213 0L340 52L430 76L480 100L560 110L684 115"],
  ["s", "M400 75L440 72L530 0Q575 -28 600 -22Q640 -15 650 20"],
  ["n", "M740 1480L790 1420L795 1300L800 1140L905 1080L1010 1015Q1040 995 1045 950L1070 800L1125 715L1240 560"],
  ["n", "M1125 380L1110 345Q1095 300 1055 298L870 288Q790 275 772 248Q740 175 700 168L657 157H620"],
  ["s", "M700 290L684 300L740 405L785 475L861 570"],
  ["s", "M815 695Q840 740 870 755L1000 840L1170 925L1240 973L1320 963Q1350 965 1390 1030L1520 1180L1580 1240L1680 1380"],
  ["s", "M260 140L213 195L170 240Q145 280 140 340L45 580L15 640Q0 670 -50 710L-90 780Q-120 825 -170 830L-208 832"],
  ["sw", "M830 322H858"],
  ["n", "M216 937L238 945"],
];

const pins: [number, number][] = [
  [1827, -25], [2379, 405], [201, 435], [432, 690], [1413, 759], [2205, 798],
  [834, 882], [1182, 1053], [1965, 1131], [1383, 1359], [1854, 1467], [843, 1485],
  [1215, 1749], [2031, 1905], [996, 2013], [2343, 2097], [2688, 2345], [2946, 2622],
];

const stops = [
  "Weißer Turm",
  "Wölckernstraße, Pillenreutherstraße",
  "Rathenauplatz",
  "Plärrer",
  "Nürnberg Hauptbahnhof",
  "Troststraße",
  "Ziegelstein",
];

const shift = (s: Sector) => `translate(${ORIGIN[s][0]} ${ORIGIN[s][1]})`;

const MapLabel = styled.text<{ $size: number }>`
  font-family: Inter, "Liberation Sans", sans-serif;
  font-size: ${(p) => p.$size}px;
  font-weight: 600;
  fill: #dde4ea;
  stroke: #34465a;
  stroke-width: 6px;
  stroke-linejoin: round;
  paint-order: stroke;
`;

const WaterLabel = styled(MapLabel)`
  font-weight: 500;
  fill: #4c76ec;
  stroke: ${W};
  stroke-width: 20px;
`;

const RoadLabel = styled(MapLabel)`
  font-weight: 560;
  letter-spacing: 6px;
  fill: #c6d2ea;
  stroke: #2b3a50;
  stroke-width: 20px;
`;

const ShieldText = styled.text`
  font-family: Roboto, "Liberation Sans", sans-serif;
  font-size: 81px;
  font-weight: 700;
  letter-spacing: 17px;
  fill: #3b3931;
`;

function Pin({ x, y }: { x: number; y: number }) {
  return (
    <g transform={`translate(${x} ${y})`}>
      <ellipse cx="22" cy="34" rx="124" ry="112" fill="#101828" opacity="0.42" filter="url(#soft)" />
      <path d="M-14 158C-28 118 -60 116 -88 90A126 126 0 1 1 88 90C60 116 28 118 14 158Q0 188 -14 158Z" fill="url(#ball)" />
      <path d="M-14 158C-28 118 -60 116 -88 90A126 126 0 1 1 88 90C60 116 28 118 14 158Q0 188 -14 158Z" fill="url(#shade)" />
      <circle cx="1" cy="-44" r="36.5" fill="#f2e0fc" />
      <path d="M-9 -1Q1 3 12 -1L8 76Q8 81 1 81Q-5 81 -6 76Z" fill="#f0dcfb" />
    </g>
  );
}

function CityMap() {
  return (
    <MapCanvas viewBox="0 0 3537 2712" preserveAspectRatio="none">
      <defs>
        <radialGradient id="ball" gradientUnits="userSpaceOnUse" cx="0" cy="-50" r="175">
          <stop offset="0" stopColor="#cf85f5" />
          <stop offset="0.45" stopColor="#c672f1" />
          <stop offset="1" stopColor="#b254e2" />
        </radialGradient>
        <linearGradient id="shade" gradientUnits="userSpaceOnUse" x1="0" y1="20" x2="0" y2="172">
          <stop offset="0" stopColor="#9a45c6" stopOpacity="0" />
          <stop offset="1" stopColor="#9641c2" stopOpacity="0.95" />
        </linearGradient>
        <filter id="soft" x="-30%" y="-30%" width="160%" height="160%">
          <feGaussianBlur stdDeviation="20" />
        </filter>
        <path id="schnellweg" d="M1240 2810C1250 2700 1290 2590 1370 2540C1450 2485 1510 2460 1565 2415C1615 2375 1640 2300 1646 2178" />
        <path id="rednitz" d="M165 1632C190 1730 245 1805 330 1905" />
      </defs>
      <rect width="3537" height="2712" fill={U} />
      {land.map(([s, color, d], i) => (
        <path key={i} d={d} fill={color} transform={shift(s)} />
      ))}
      <g fill="none" stroke={W} strokeLinejoin="round">
        {water.map(([s, d, w], i) => (
          <path key={i} d={d} strokeWidth={w} transform={shift(s)} />
        ))}
      </g>
      {lakes.map(([s, d], i) => (
        <path key={i} d={d} fill={W} transform={shift(s)} />
      ))}
      <g fill="none" stroke="#1c665a" strokeWidth="5">
        <path d="M3188 1575V1820M3140 1190L3163 1270L3165 1310L3200 1345M3230 1130L3305 1182L3400 1175L3537 1140" />
      </g>
      <g fill="none" stroke="#68738c" strokeWidth="7.5" strokeLinejoin="round">
        {minorRoads.map(([s, d], i) => (
          <path key={i} d={d} transform={shift(s)} />
        ))}
      </g>
      <g fill="none" stroke="#2f4257" strokeWidth="18" strokeLinejoin="round">
        {mainRoads.map(([s, d], i) => (
          <path key={i} d={d} transform={shift(s)} />
        ))}
      </g>
      <g fill="none" stroke="#75889f" strokeWidth="13" strokeLinejoin="round">
        {mainRoads.map(([s, d], i) => (
          <path key={i} d={d} transform={shift(s)} />
        ))}
      </g>
      <g fill="none" stroke="#2a394e" strokeLinejoin="round">
        {motorways.map(([s, d, w], i) => (
          <path key={i} d={d} strokeWidth={w + 9} transform={shift(s)} />
        ))}
      </g>
      <g fill="none" stroke="#8a9dc1" strokeLinejoin="round">
        {motorways.map(([s, d, w], i) => (
          <path key={i} d={d} strokeWidth={w} transform={shift(s)} />
        ))}
      </g>
      <g fill="none" stroke="#bf5af2" strokeWidth="21" strokeLinejoin="round" strokeLinecap="round">
        {subway.map(([s, d], i) => (
          <path key={i} d={d} transform={shift(s)} />
        ))}
      </g>

      <circle cx="136" cy="2268" r="15" fill="#16171c" stroke="#dde4ea" strokeWidth="5" />
      <MapLabel $size={96} x="1589" y="248" textLength="474">Flughafen</MapLabel>
      <MapLabel $size={97} x="706" y="2285" textLength="578">Röthenbach</MapLabel>
      <MapLabel $size={97} x="105" y="2343" textAnchor="end">ch</MapLabel>
      <WaterLabel $size={86}>
        <textPath href="#rednitz" textLength="312">Rednitz</textPath>
      </WaterLabel>
      <RoadLabel $size={75} textAnchor="end">
        <textPath href="#schnellweg" startOffset="100%">KENSCHNELLWEG</textPath>
      </RoadLabel>

      <rect x="2540" y="1332" width="143" height="122" rx="22" fill="#d2aa19" stroke="#46443a" strokeWidth="6" />
      <ShieldText transform="translate(2567 1422) scale(0.78 1)">4R</ShieldText>

      {pins.map(([x, y]) => (
        <Pin key={`${x}-${y}`} x={x} y={y} />
      ))}
    </MapCanvas>
  );
}

export default function App() {
  return (
    <Screen>
      <GlobalStyle />
      <StatusBar>
        <StatusLeft>
          <ClockRow>
            <Clock>18:07</Clock>
            <svg width="40" height="44" viewBox="0 0 40 44">
              <path d="M12 7C13 5 15 4 16 3.600C17 -.6 23 -.6 24 3.600C30 5.500 33 10 33.300 16C33.500 23 34 26 38 29C39.500 30.500 39.500 32 38.500 33.500ZM6.500 15.500L25.500 34.500H3.500C0 34.500 -.5 31 2 28.500C5.500 25 6 22 6.500 15.500ZM13 37H27C26 41 23.500 43 20 43S14 41 13 37Z" fill="#fff" />
              <path d="M1.800 3.500L38 40" stroke="#000" strokeWidth="8" />
              <path d="M1.800 3.500L38 40" stroke="#fff" strokeWidth="3.400" strokeLinecap="round" />
            </svg>
          </ClockRow>
          <BackLink>
            <svg width="21" height="22" viewBox="0 0 21 22">
              <path d="M1.200 9.600L18 .6Q20.500 -.2 20.500 2.500V19.500Q20.500 22.200 18 21.400L1.200 12.400Q-.8 11 1.200 9.600Z" fill="#fff" />
            </svg>
            Fotos
          </BackLink>
        </StatusLeft>
        <StatusRight>
          <svg width="58" height="38" viewBox="0 0 58 38">
            <rect x="0" y="23" width="10" height="14" rx="3" fill="#fff" />
            <rect x="16" y="16" width="10" height="21" rx="3" fill="#fff" />
            <rect x="32" y="8" width="10" height="29" rx="3" fill="#fff" />
            <rect x="48" y="0" width="10" height="37" rx="3" fill="#fff" />
          </svg>
          <WifiIcon width="51" height="38" viewBox="0 0 51 38">
            <path d="M.7 10.800C14.500 -3.200 36.500 -3.200 50.300 10.800Q50.700 11.500 50.200 12L46 15.800Q45.300 16.300 44.600 15.700C33.500 4.900 17.500 4.900 6.400 15.700Q5.700 16.300 5 15.800L.8 12Q.3 11.500 .7 10.800Z" fill="#fff" />
            <path d="M9.200 19.400C18.500 10.700 32.500 10.700 41.800 19.400Q42.400 20 41.800 20.700L37.600 24.700Q37 25.200 36.400 24.700C30 19.300 21 19.300 14.600 24.700Q14 25.200 13.400 24.700L9.200 20.700Q8.600 20 9.200 19.400Z" fill="#fff" />
            <path d="M18 28.200C22.400 24.900 28.600 24.900 33 28.200Q33.700 28.900 33.100 29.600L26.200 36.500Q25.500 37.200 24.800 36.500L17.900 29.600Q17.300 28.900 18 28.200Z" fill="#fff" />
          </WifiIcon>
          <Battery>84</Battery>
          <BatteryTip />
        </StatusRight>
      </StatusBar>

      <Title>Overpass API Demo</Title>
      <Picker>
        Nuremberg Subway Lines with Stops
        <svg width="26" height="38" viewBox="0 0 26 38" fill="none" stroke="#bf5af2" strokeWidth="4.200" strokeLinecap="round" strokeLinejoin="round">
          <path d="M2.500 13.500L13 3L23.500 13.500M2.500 24.500L13 35L23.500 24.500" />
        </svg>
      </Picker>

      <MapFrame>
        <CityMap />
        <MapBrand>
          <AppleMark />
          Maps
        </MapBrand>
        <Legal>Legal</Legal>
        <LocateButton aria-label="Show current location">
          <svg width="46" height="46" viewBox="0 0 46 46">
            <path d="M2 18.500L40.500 1.300Q46.500 -.5 44.300 5.500L27 42.500Q25.500 45.500 22.800 44.500Q21.200 43.800 21.200 41.500V25.500Q21.200 24.300 20 24.300H4.200Q1.500 24.200 1.100 21.800Q.8 19.500 2 18.500Z" fill="#bf5af2" />
          </svg>
        </LocateButton>
      </MapFrame>

      <StopList>
        {stops.map((name) => (
          <StopRow key={name}>{name}</StopRow>
        ))}
      </StopList>
      <HomeIndicator />
    </Screen>
  );
}
